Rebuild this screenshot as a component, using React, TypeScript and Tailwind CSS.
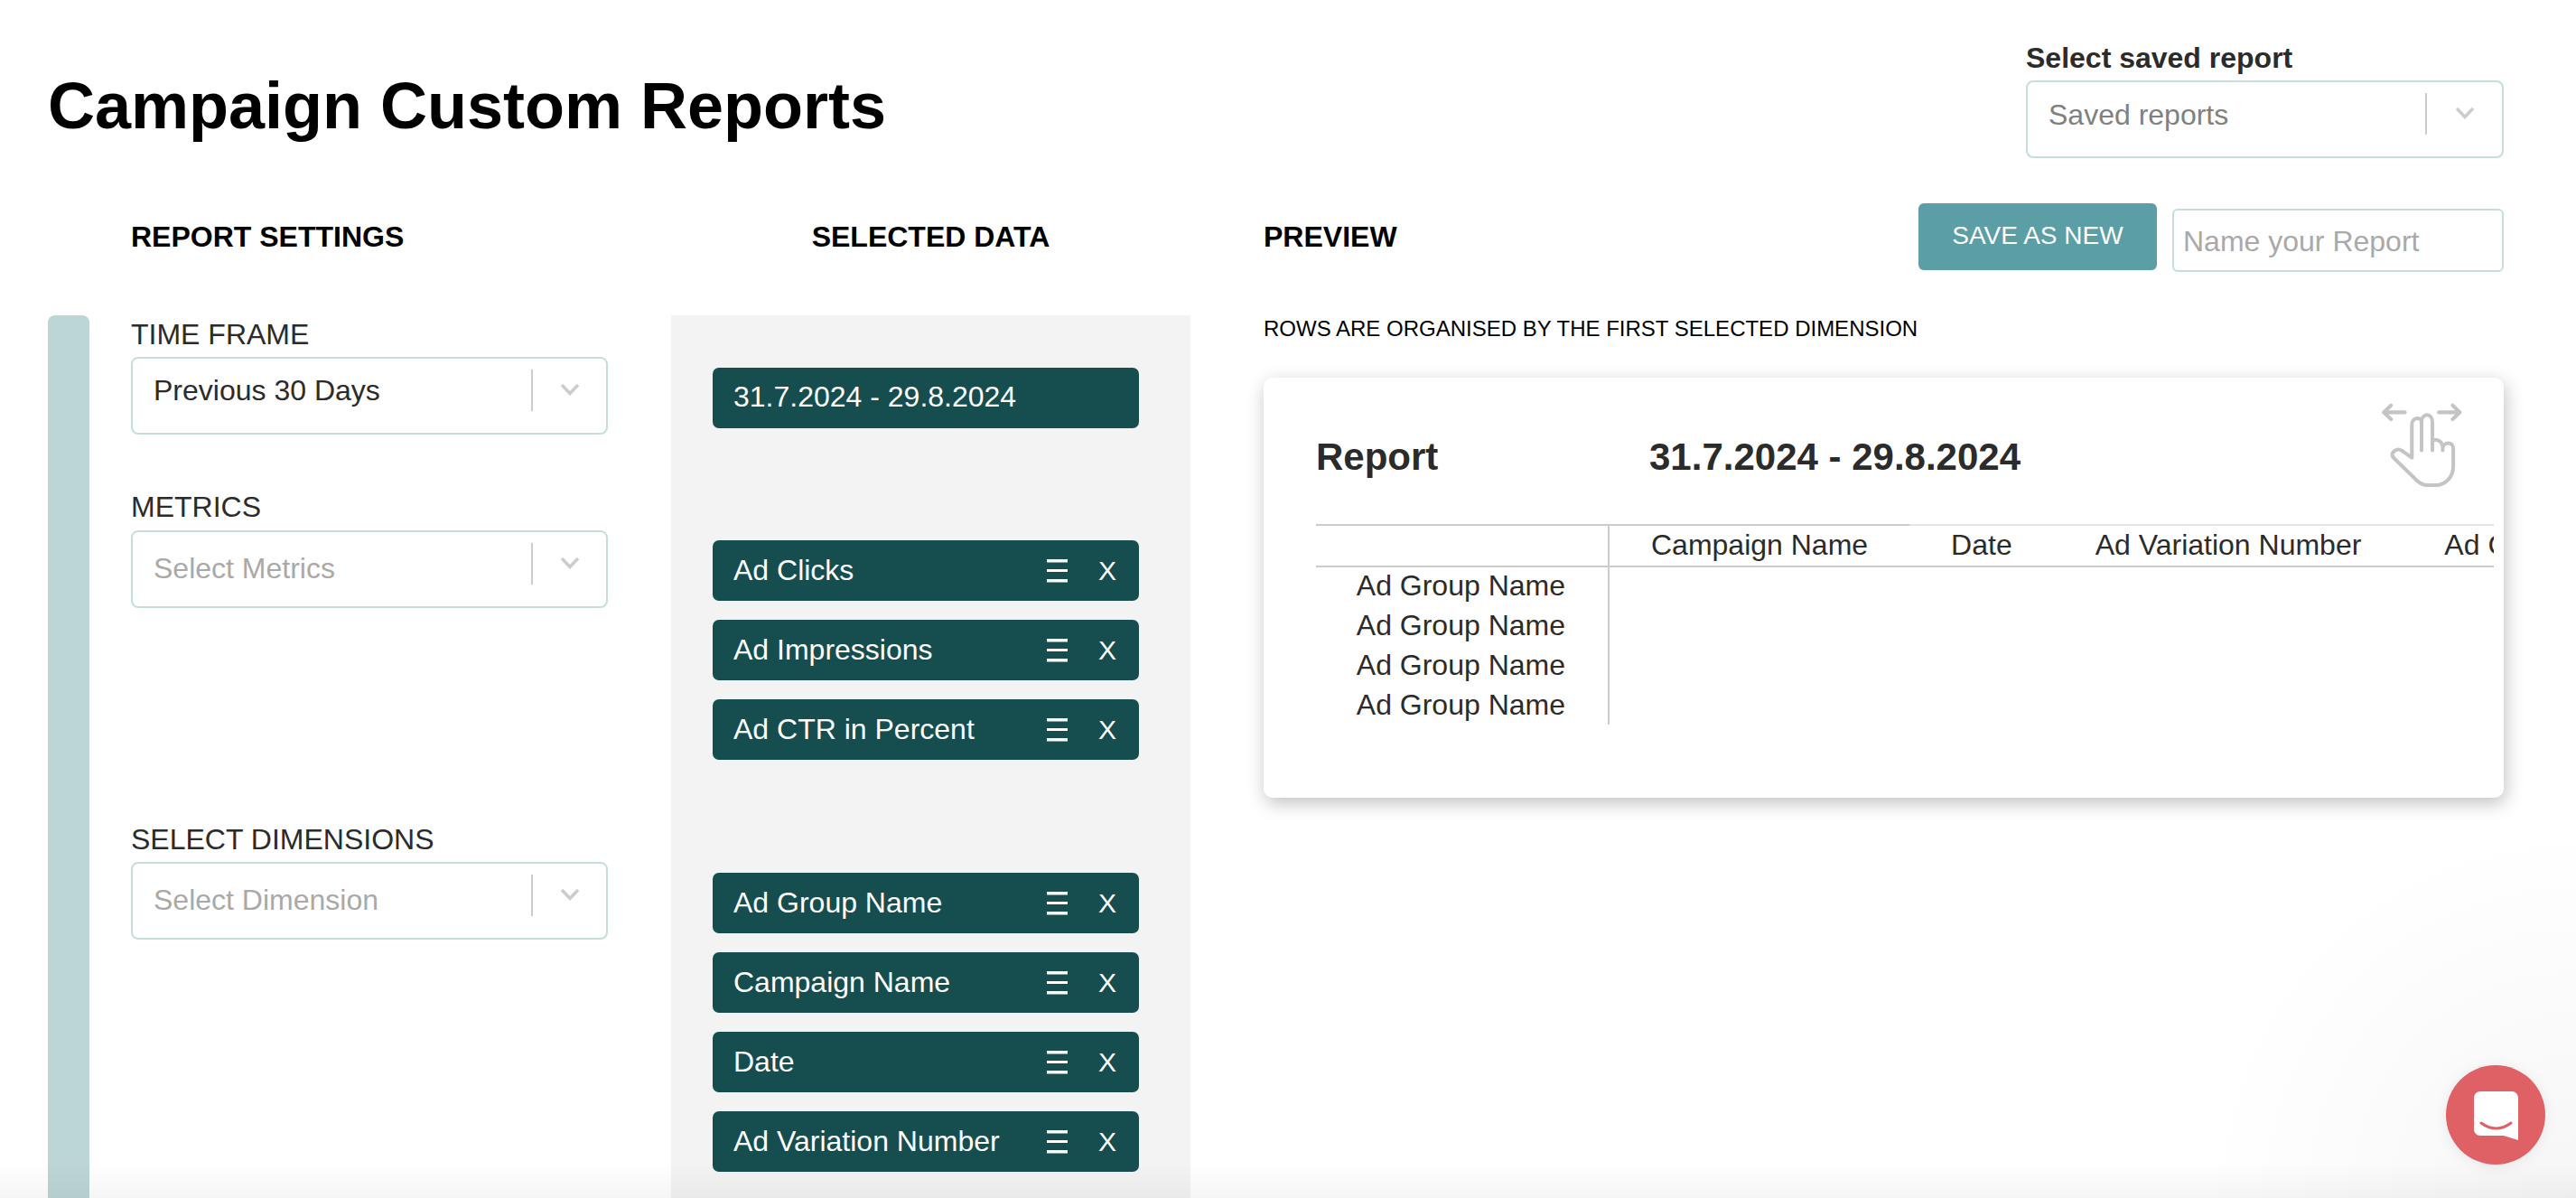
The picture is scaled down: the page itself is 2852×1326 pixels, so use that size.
import React from "react";

function Chevron() {
  return (
    <svg width="22" height="14" viewBox="0 0 22 14" fill="none" className="mb-[2px]">
      <path d="M2 2 L11 11.5 L20 2" stroke="#cccccc" strokeWidth="3.5" />
    </svg>
  );
}

function SelectBox({
  text,
  tone,
  textClass = "",
  boxWidth = "w-[528px]",
  chevronWidth = "w-[81px]",
}: {
  text: string;
  tone: string;
  textClass?: string;
  boxWidth?: string;
  chevronWidth?: string;
}) {
  return (
    <div className={`${boxWidth} h-[86px] border-2 border-[#c5dedb] rounded-[8px] bg-white flex items-start pt-[12px]`}>
      <div className={`flex-1 h-[46px] flex items-center pl-[23px] text-[32px] ${tone}`}>
        <span className={textClass}>{text}</span>
      </div>
      <div className="w-[2px] h-[46px] bg-[#cccccc]" />
      <div className={`${chevronWidth} h-[46px] flex items-center justify-center`}>
        <Chevron />
      </div>
    </div>
  );
}

function Pill({ text, controls = true }: { text: string; controls?: boolean }) {
  return (
    <div className="h-[67px] w-[472px] rounded-[7px] bg-[#164d4f] flex items-center pl-[23px] text-[32px] text-white">
      <span className={controls ? "flex-1 mb-[1px]" : "flex-1 mb-[4px]"}>{text}</span>
      {controls && (
        <>
          <svg width="24" height="26" viewBox="0 0 24 26" className="mr-[33px]">
            <rect x="0" y="0" width="23" height="3.5" fill="#ffffff" />
            <rect x="0" y="11" width="23" height="3" fill="#ffffff" />
            <rect x="0" y="22" width="23" height="3.5" fill="#ffffff" />
          </svg>
          <span className="text-[30px] mr-[25px] mb-[1px]">X</span>
        </>
      )}
    </div>
  );
}

function HandIcon() {
  return (
    <svg width="94" height="97" viewBox="225 135 280 290" fill="none" stroke="#c4c4c4" strokeWidth="12" strokeLinecap="round" strokeLinejoin="round">
      <path d="M310 172 H240 M264 149 L240 172 L264 195" />
      <path d="M422 172 H492 M468 149 L492 172 L468 195" />
      <path d="M333 322 L300 299 C284 288 258 306 272 322 L350 398 C362 409 372 413 385 413 H412 C445 413 470 385 470 350 V292 C470 268 437 268 435 292 V298 M435 292 C435 258 401 258 401 272 M401 298 V205 C401 172 365 172 365 205 V298 M365 205 C365 185 333 188 333 212 V322" />
    </svg>
  );
}

const dimensionCols = ["Campaign Name", "Date", "Ad Variation Number", "Ad Clicks"];

export default function App() {
  return (
    <div className="relative h-[1326px] overflow-hidden bg-white font-['Liberation_Sans',Arial,sans-serif] text-[#2b2b2b]">
      <header className="flex items-start justify-between pl-[53px] pr-[80px] pt-[46px] h-[175px]">
        <h1 className="text-[72px] leading-[84px] font-bold text-black mt-[29px]">Campaign Custom Reports</h1>
        <div>
          <div className="text-[32px] leading-[36px] font-bold mb-[7px]">Select saved report</div>
          <SelectBox text="Saved reports" tone="text-[#808080]" textClass="mt-[2px]" boxWidth="w-[529px]" chevronWidth="w-[83px]" />
        </div>
      </header>

      <div className="mt-[50px] pl-[53px] grid grid-cols-[92px_598px_656px_1373px] grid-rows-[124px_977px]">
        <div />
        <div className="h-[74px] flex items-center text-[32px] font-bold text-black">REPORT SETTINGS</div>
        <div className="w-[575px] h-[74px] flex items-center justify-center text-[32px] font-bold text-black">SELECTED DATA</div>
        <div className="flex items-start justify-between">
          <div className="h-[74px] flex items-center text-[32px] font-bold text-black">PREVIEW</div>
          <div className="flex items-start gap-[17px]">
            <button className="w-[264px] h-[74px] rounded-[6px] bg-[#5b9ea6] text-white text-[28px] pb-[3px]">SAVE AS NEW</button>
            <input
              readOnly
              placeholder="Name your Report"
              className="mt-[6px] w-[367px] h-[70px] border-2 border-[#c5dedb] rounded-[6px] pl-[10px] pt-[2px] text-[32px] placeholder:text-[#a9a9a9] outline-none"
            />
          </div>
        </div>

        <div className="w-[46px] bg-[#bcd5d5] rounded-t-[8px]" />

        <div className="pt-[3px]">
          <div className="text-[32px] leading-[36px] mb-[7px]">TIME FRAME</div>
          <SelectBox text="Previous 30 Days" tone="text-[#2b2b2b]" />
          <div className="text-[32px] leading-[36px] mb-[8px] mt-[62px]">METRICS</div>
          <SelectBox text="Select Metrics" tone="text-[#a9a9a9]" textClass="mt-[9px]" />
          <div className="text-[32px] leading-[36px] mb-[7px] mt-[238px]">SELECT DIMENSIONS</div>
          <SelectBox text="Select Dimension" tone="text-[#a9a9a9]" textClass="mt-[9px]" />
        </div>

        <div className="w-[575px] bg-[#f3f3f3] pt-[58px] pl-[46px]">
          <Pill text="31.7.2024 - 29.8.2024" controls={false} />
          <div className="mt-[124px] flex flex-col gap-[21px]">
            <Pill text="Ad Clicks" />
            <Pill text="Ad Impressions" />
            <Pill text="Ad CTR in Percent" />
          </div>
          <div className="mt-[125px] flex flex-col gap-[21px]">
            <Pill text="Ad Group Name" />
            <Pill text="Campaign Name" />
            <Pill text="Date" />
            <Pill text="Ad Variation Number" />
          </div>
        </div>

        <div>
          <div className="text-[24px] leading-[30px] text-black">ROWS ARE ORGANISED BY THE FIRST SELECTED DIMENSION</div>
          <div className="relative mt-[39px] h-[465px] rounded-[10px] bg-white shadow-[2px_6px_20px_rgba(0,0,0,0.25)] pl-[58px] pr-[11px] pt-[64px]">
            <div className="absolute top-[26px] right-[44px]">
              <HandIcon />
            </div>
            <div className="flex h-[46px] items-center text-[42px] font-bold">
              <span className="w-[369px]">Report</span>
              <span>31.7.2024 - 29.8.2024</span>
            </div>
            <div className="mt-[52px] overflow-hidden text-[32px]">
              <div className="flex h-[48px] whitespace-nowrap">
                <div className="w-[325px] shrink-0 border-t-2 border-b-2 border-r-2 border-[#cccccc]" />
                {dimensionCols.map((c, i) => (
                  <div
                    key={c}
                    className={`shrink-0 flex items-center px-[46px] border-b-2 border-b-[#cccccc] border-t-2 ${i === 0 ? "border-t-[#cccccc]" : "border-t-[#e4e4e4]"}`}
                  >
                    <span className="mb-[2px]">{c}</span>
                  </div>
                ))}
              </div>
              <div className="w-[325px] border-r-2 border-[#cccccc] pr-[47px] text-right leading-[44px]">
                <div className="-mt-[2px]">Ad Group Name</div>
                <div>Ad Group Name</div>
                <div>Ad Group Name</div>
                <div>Ad Group Name</div>
              </div>
            </div>
          </div>
        </div>
      </div>

      <div className="absolute inset-x-0 bottom-0 h-[40px] bg-gradient-to-t from-[rgba(0,0,0,0.04)] to-transparent pointer-events-none" />
      <div className="absolute right-0 bottom-0 w-[420px] h-[420px] bg-[radial-gradient(circle_at_100%_100%,rgba(0,0,0,0.035),transparent_70%)] pointer-events-none" />

      <div className="absolute left-[2708px] top-[1179px] w-[110px] h-[110px] rounded-full bg-[#e06165] flex items-center justify-center shadow-[0_2px_16px_rgba(0,0,0,0.08)]">
        <svg width="49" height="54" viewBox="0 0 49 54" className="mt-[2px]">
          <path d="M7 0 H42 a7 7 0 0 1 7 7 V54 L33 49 H7 a7 7 0 0 1 -7 -7 V7 a7 7 0 0 1 7 -7 Z" fill="#ffffff" />
          <path d="M8 35 Q24.5 47 41 35" fill="none" stroke="#e06165" strokeWidth="3" strokeLinecap="round" />
        </svg>
      </div>
    </div>
  );
}
